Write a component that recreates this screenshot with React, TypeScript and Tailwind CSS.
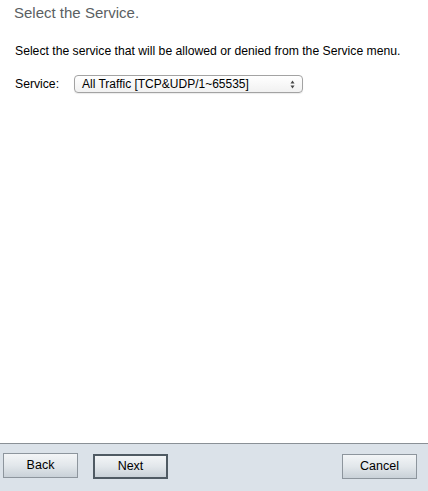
import React from 'react';

const font = { fontFamily: '"Liberation Sans", Arial, sans-serif' };

const WizardButton: React.FC<{ label: string; primary?: boolean }> = ({ label, primary }) => (
  <button
    type="button"
    className={
      primary
        ? 'w-[75px] h-[25px] text-[12.5px] text-black border-2 border-[#4f5a63] bg-gradient-to-b from-[#f3f5f7] via-[#e2e7eb] to-[#c9d1d8]'
        : 'w-[75px] h-[25px] text-[12.5px] text-black border border-[#8d959d] bg-gradient-to-b from-[#f3f5f7] via-[#e2e7eb] to-[#c9d1d8]'
    }
  >
    {label}
  </button>
);

export default function App() {
  return (
    <div className="w-[428px] h-[491px] flex flex-col bg-white" style={font}>
      <div className="flex-1 px-[15px]">
        {/* Titulo */}
        <h1 className="pt-[4px] -ml-[1px] text-[15px] leading-[18px] text-[#5b5f63]">Select the Service.</h1>
        <p className="mt-[22px] text-[12.2px] leading-[15px] text-black">
          Select the service that will be allowed or denied from the Service menu.
        </p>

        {/* Selector de servicio */}
        <div className="mt-[16px] flex items-center">
          <span className="w-[59px] text-[12.2px] text-black">Service:</span>
          <div className="relative w-[229px] h-[18px] rounded-[4px] border border-[#a3a3a3] bg-gradient-to-b from-white to-[#f1f1f1] shadow-[0_1px_1px_rgba(0,0,0,0.08)] flex items-center pl-[7px]">
            <span className="text-[12px] text-black leading-none">All Traffic [TCP&amp;UDP/1~65535]</span>
            <svg className="absolute right-[7px] top-[4px]" width="5" height="9" viewBox="0 0 5 9">
              <path d="M2.5 0.5 L4.5 3.5 L0.5 3.5 Z" fill="#444" />
              <path d="M0.5 5.5 L4.5 5.5 L2.5 8.5 Z" fill="#444" />
            </svg>
          </div>
        </div>
      </div>

      {/* Pie con botones */}
      <div className="h-[48px] border-t border-[#8a9096] bg-[#dbe2e9] flex items-start pt-[9px] px-[3px]">
        <WizardButton label="Back" />
        <div className="ml-[15px]">
          <WizardButton label="Next" primary />
        </div>
        <div className="ml-auto mr-[8px]">
          <WizardButton label="Cancel" />
        </div>
      </div>
    </div>
  );
}
